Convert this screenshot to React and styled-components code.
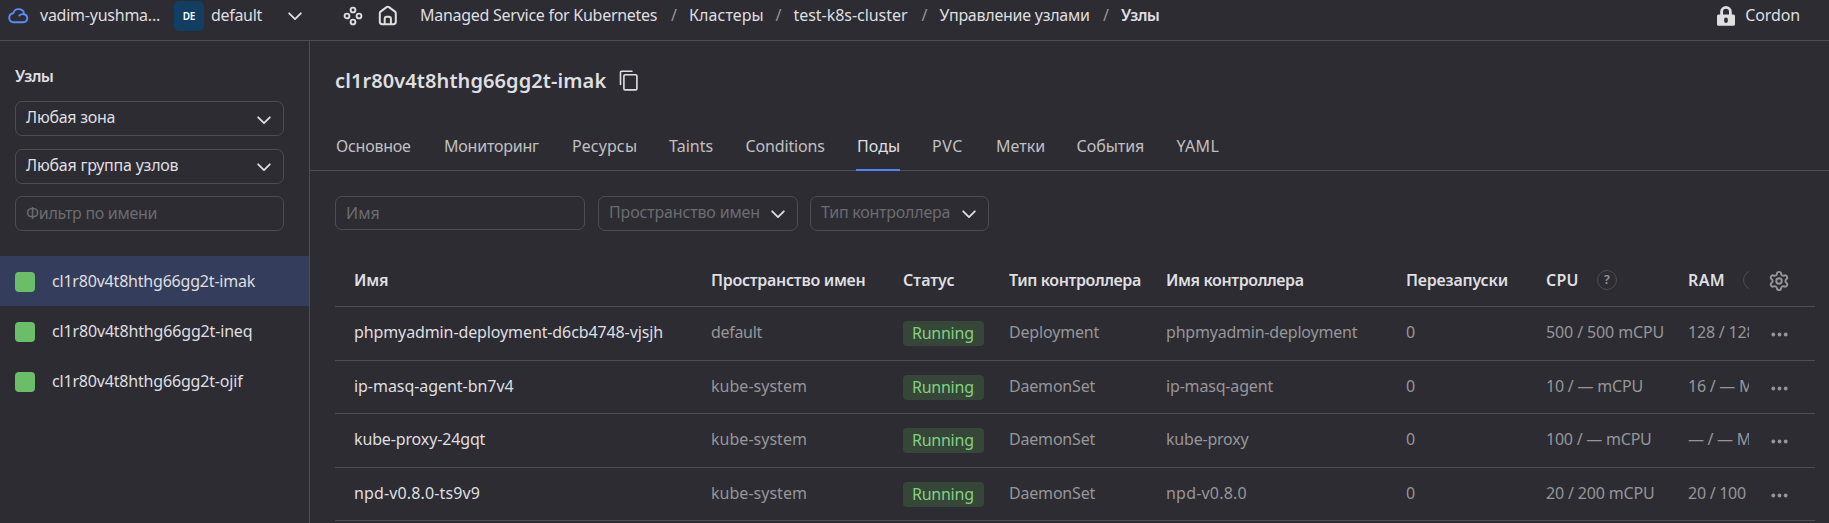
import React from 'react';
import styled, { createGlobalStyle, css } from 'styled-components';
import { Settings } from 'lucide-react';

const c = {
  bg: '#2d2c33',
  text: '#dfdfe0',
  complementary: '#c0c0c2',
  secondary: '#969699',
  hint: '#6c6b70',
  line: '#4d4c52',
  selected: '#353d5c',
  accent: '#5282ff',
};

const GlobalStyle = createGlobalStyle`
  *, *::before, *::after { box-sizing: border-box; }
  body {
    margin: 0;
    background: ${c.bg};
    color: ${c.text};
    font: 400 16px/24px "Noto Sans", "Open Sans", sans-serif;
    overflow: hidden;
  }
`;

const Page = styled.div`
  display: flex;
  flex-direction: column;
  height: 523px;
  overflow: hidden;
`;

const Text = styled.span`
  display: block;
  flex: none;
  white-space: pre;
  letter-spacing: ${(p) => p.$track || 0}px;
  font-weight: ${(p) => (p.$bold ? 600 : 400)};
  width: ${(p) => (p.$w ? `${p.$w}px` : 'auto')};
`;

/* Header */
const Header = styled.header`
  flex: none;
  display: flex;
  align-items: flex-start;
  height: 41px;
  border-bottom: 1px solid ${c.line};
`;

const Icon = styled.svg`
  display: block;
  flex: none;
  fill: none;
  stroke: ${(p) => p.$color || c.text};
  stroke-width: ${(p) => p.$stroke || 1.9};
  stroke-linecap: round;
  stroke-linejoin: round;
`;

const Account = styled.div`
  display: flex;
  width: 343px;
  padding-left: 7px;
  ${Icon} { margin-top: 7px; }
  ${Text} { margin-top: 3px; }
`;

const AccountName = styled(Text)`
  width: 124px;
  margin-left: 11px;
`;

const FolderBadge = styled.div`
  width: 30px;
  height: 30px;
  margin: 1px 7px 0 10px;
  border-radius: 5px;
  background: #123e63;
  color: #fff;
  font-size: 10px;
  font-weight: 600;
  line-height: 31px;
  text-align: center;
  letter-spacing: -0.3px;
`;

const DropArrow = styled.span`
  padding-top: 5px;
`;

const Shortcuts = styled.div`
  display: flex;
  gap: 14px;
  width: 77px;
  padding-top: 5px;
`;

const Crumbs = styled.nav`
  display: flex;
  flex: 1;
  padding-top: 3px;
`;

const Slash = styled.span`
  width: 6px;
  margin: 0 12px 0 11px;
  color: ${c.secondary};
`;

const CordonButton = styled.div`
  display: flex;
  gap: 10px;
  padding: 3px 29px 0 0;
  ${Icon} { margin-top: 2px; }
`;

/* Body */
const Body = styled.div`
  display: flex;
  flex: 1;
  min-height: 0;
`;

const Sidebar = styled.aside`
  flex: none;
  width: 310px;
  border-right: 1px solid ${c.line};
`;

const SidebarFilters = styled.div`
  display: flex;
  flex-direction: column;
  padding: 23px 25px 0 15px;
  height: 215px;
`;

const Field = styled.div`
  display: flex;
  flex: none;
  justify-content: ${(p) => (p.$compact ? 'flex-start' : 'space-between')};
  width: ${(p) => (p.$w ? `${p.$w}px` : 'auto')};
  height: ${(p) => p.$h || 35}px;
  padding: ${(p) => p.$top || 3}px 12px 0 10px;
  border: 1px solid ${c.line};
  border-radius: 7px;
  color: ${(p) => (p.$hint ? c.hint : c.text)};
  ${Icon} { margin-top: ${(p) => p.$arrow || 10}px; }
`;

const SidebarField = styled(Field)`
  margin-top: ${(p) => p.$gap}px;
`;

const Node = styled.div`
  display: flex;
  align-items: center;
  height: 50px;
  padding-left: 15px;
  background: ${(p) => (p.$active ? c.selected : 'transparent')};
`;

const NodeState = styled.span`
  width: 20px;
  height: 20px;
  margin: 2px 17px 0 0;
  border-radius: 4px;
  background: #6cbd6a;
`;

const Main = styled.main`
  flex: 1;
  min-width: 0;
`;

const TitleRow = styled.div`
  display: flex;
  height: 88px;
  padding: 26px 0 0 25px;
  font-size: 20px;
  line-height: 28px;
  ${Icon} { margin: 3px 0 0 13px; }
`;

const Tabs = styled.div`
  display: flex;
  gap: 31px;
  height: 42px;
  padding-left: 25px;
  border-bottom: 1px solid ${c.line};
`;

const Tab = styled(Text)`
  height: 42px;
  padding: 5px 0 0 1px;
  color: ${c.complementary};
  ${(p) => p.$active && css`
    color: ${c.text};
    border-bottom: 2px solid ${c.accent};
  `}
`;

const TableFilters = styled.div`
  display: flex;
  gap: 12px;
  height: 61px;
  padding: 25px 0 0 25px;
`;

const SearchField = styled(Field)`
  margin-right: 1px;
`;

const Table = styled.div`
  margin: 0 14px 0 25px;
`;

const Row = styled.div`
  display: grid;
  grid-template-columns: 357px 192px 106px 157px 240px 140px 142px 61px 66px;
  height: ${(p) => p.$h}px;
  padding: ${(p) => p.$top}px 0 0 19px;
  border-bottom: 1px solid ${c.line};
`;

const Cell = styled.div`
  display: flex;
  overflow: hidden;
  white-space: nowrap;
  color: ${(p) => (p.$primary ? c.text : c.secondary)};
`;

const Status = styled.span`
  width: 81px;
  height: 25px;
  margin-top: 1px;
  padding-left: 9px;
  border-radius: 4px;
  background: #364638;
  color: #84d182;
  letter-spacing: -0.25px;
`;

const Help = styled.span`
  flex: none;
  width: 20px;
  height: 20px;
  margin: 2px 0 0 19px;
  border: 1px solid ${c.line};
  border-radius: 50%;
  color: ${c.secondary};
  font-size: 12.5px;
  font-weight: 600;
  line-height: 18px;
  text-align: center;
`;

const Actions = styled.div`
  display: flex;
  padding: ${(p) => p.$top}px 0 0 ${(p) => p.$left}px;
`;

const Chevron = () => (
  <Icon width="14" height="9" viewBox="0 0 14 9" $stroke={1.8}>
    <path d="M1.2 1.3 7 7.1l5.8-5.8" />
  </Icon>
);

const Cloud = () => (
  <Icon width="22" height="17" viewBox="0 0 22 17" $color="#5a8bff">
    <path d="M5.6 15.2h10.6a4 4 0 0 0 .9-7.9A5.5 5.5 0 0 0 6.3 6.2 4.6 4.6 0 0 0 5.6 15.2z" />
    <path d="M12.3 8.6c.9-1.2 2.6-1.8 4.6-1.3" />
  </Icon>
);

const Services = () => (
  <Icon width="21" height="22" viewBox="0 0 21 22">
    <circle cx="10" cy="5" r="2.4" />
    <circle cx="4" cy="11" r="2.4" />
    <circle cx="16" cy="11" r="2.4" />
    <circle cx="10" cy="17" r="2.4" />
  </Icon>
);

const Home = () => (
  <Icon width="20" height="21" viewBox="0 0 20 21" $stroke={2}>
    <path d="M1.8 8.2a2 2 0 0 1 .8-1.6l6-4.5a2 2 0 0 1 2.4 0l6 4.5a2 2 0 0 1 .8 1.6v8.6a2.4 2.4 0 0 1-2.4 2.4H4.2a2.4 2.4 0 0 1-2.4-2.4z" />
    <path d="M6.7 19v-5.3a2 2 0 0 1 2-2h2.2a2 2 0 0 1 2 2V19" />
  </Icon>
);

const Lock = () => (
  <Icon width="18" height="21" viewBox="0 0 18 21" $stroke={2.8}>
    <path d="M4.6 11V6.8a4.4 4.4 0 0 1 8.8 0V11" />
    <path
      fill={c.text}
      stroke="none"
      fillRule="evenodd"
      d="M1.5 9.4h15A1.5 1.5 0 0 1 18 10.9v8.3a1.6 1.6 0 0 1-1.6 1.6H1.6A1.6 1.6 0 0 1 0 19.2v-8.3a1.5 1.5 0 0 1 1.5-1.5zM9 12.5a1.8 1.8 0 0 0-1.8 1.8v2a1.8 1.8 0 0 0 3.6 0v-2A1.8 1.8 0 0 0 9 12.5z"
    />
  </Icon>
);

const Copy = () => (
  <Icon width="19" height="21" viewBox="0 0 19 21" $stroke={1.6}>
    <path d="M1.5 14.5V2.3a1 1 0 0 1 1-1H13" />
    <rect x="4.9" y="4.7" width="13" height="15.2" rx="1.2" />
  </Icon>
);

const Dots = () => (
  <Icon width="17" height="5" viewBox="0 0 17 5" $color="none">
    {[2.3, 8.5, 14.7].map((x) => (
      <circle key={x} cx={x} cy="2.5" r="1.9" fill={c.secondary} />
    ))}
  </Icon>
);

const nodes = [
  ['cl1r80v4t8hthg66gg2t-imak', -0.2],
  ['cl1r80v4t8hthg66gg2t-ineq', -0.16],
  ['cl1r80v4t8hthg66gg2t-ojif', -0.18],
];

const tabs = [
  ['Основное', 77, -0.25],
  ['Мониторинг', 97, -0.22],
  ['Ресурсы', 66, 0.15],
  ['Taints', 45.5, 0.02],
  ['Conditions', 80.5, -0.15],
  ['Поды', 44, 0.07],
  ['PVC', 33, 0.6],
  ['Метки', 49.5, 0.05],
  ['События', 69, -0.05],
  ['YAML', 46, 0.4],
];

const crumbs = [
  ['Managed Service for Kubernetes', -0.27, 240],
  ['Кластеры', 0.07, 75.5],
  ['test-k8s-cluster', -0.04, 117],
  ['Управление узлами', -0.25, 152.5],
];

const columns = [
  ['Имя', -0.2],
  ['Пространство имен', -0.3],
  ['Статус', 0],
  ['Тип контроллера', -0.41],
  ['Имя контроллера', -0.41],
  ['Перезапуски', -0.2],
  ['CPU', 0.23, 32],
  ['RAM', 0.4, 36],
];

const pods = [
  {
    name: ['phpmyadmin-deployment-d6cb4748-vjsjh', -0.11],
    ns: ['default', -0.31],
    kind: ['Deployment', -0.17],
    owner: ['phpmyadmin-deployment', -0.21],
    cpu: ['500 / 500 mCPU', -0.12],
    ram: ['128 / 128 МБ', -0.2],
  },
  {
    name: ['ip-masq-agent-bn7v4', -0.05],
    ns: ['kube-system', 0.02],
    kind: ['DaemonSet', -0.19],
    owner: ['ip-masq-agent', -0.17],
    cpu: ['10 / — mCPU', -0.2],
    ram: ['16 / — МБ', -0.25],
  },
  {
    name: ['kube-proxy-24gqt', -0.14],
    ns: ['kube-system', 0.02],
    kind: ['DaemonSet', -0.19],
    owner: ['kube-proxy', -0.21],
    cpu: ['100 / — mCPU', -0.23],
    ram: ['— / — МБ', -0.3],
  },
  {
    name: ['npd-v0.8.0-ts9v9', 0.14],
    ns: ['kube-system', 0.02],
    kind: ['DaemonSet', -0.19],
    owner: ['npd-v0.8.0', 0.2],
    cpu: ['20 / 200 mCPU', -0.16],
    ram: ['20 / 100 МБ', -0.27],
  },
];

const TextCell = ({ value: [text, track], primary }) => (
  <Cell $primary={primary}>
    <Text $track={track}>{text}</Text>
  </Cell>
);

export default function App() {
  return (
    <Page>
      <GlobalStyle />
      <Header>
        <Account>
          <Cloud />
          <AccountName $track={-0.24}>vadim-yushma...</AccountName>
          <FolderBadge>DE</FolderBadge>
          <Text $track={-0.31} $w={77}>default</Text>
          <DropArrow><Chevron /></DropArrow>
        </Account>
        <Shortcuts>
          <Services />
          <Home />
        </Shortcuts>
        <Crumbs>
          {crumbs.map(([label, track, w]) => (
            <React.Fragment key={label}>
              <Text $track={track} $w={w}>{label}</Text>
              <Slash>/</Slash>
            </React.Fragment>
          ))}
          <Text $bold $track={-0.6}>Узлы</Text>
        </Crumbs>
        <CordonButton>
          <Lock />
          <Text $track={-0.12}>Cordon</Text>
        </CordonButton>
      </Header>
      <Body>
        <Sidebar>
          <SidebarFilters>
            <Text $bold $track={-0.6}>Узлы</Text>
            <SidebarField $gap={13} $arrow={11}>
              <Text $track={-0.27}>Любая зона</Text>
              <Chevron />
            </SidebarField>
            <SidebarField $gap={13}>
              <Text $track={-0.23}>Любая группа узлов</Text>
              <Chevron />
            </SidebarField>
            <SidebarField $gap={12} $hint $top={4}>
              <Text $track={-0.3}>Фильтр по имени</Text>
            </SidebarField>
          </SidebarFilters>
          {nodes.map(([name, track], i) => (
            <Node key={name} $active={i === 0}>
              <NodeState />
              <Text $track={track}>{name}</Text>
            </Node>
          ))}
        </Sidebar>
        <Main>
          <TitleRow>
            <Text $bold $track={0.09}>cl1r80v4t8hthg66gg2t-imak</Text>
            <Copy />
          </TitleRow>
          <Tabs>
            {tabs.map(([label, w, track]) => (
              <Tab key={label} $w={w} $track={track} $active={label === 'Поды'}>{label}</Tab>
            ))}
          </Tabs>
          <TableFilters>
            <SearchField $w={250} $h={34} $top={4} $hint>
              <Text $track={0.1}>Имя</Text>
            </SearchField>
            <Field $w={200} $hint $compact>
              <Text $track={-0.16} $w={162}>Пространство имен</Text>
              <Chevron />
            </Field>
            <Field $w={179} $hint $compact>
              <Text $track={-0.23} $w={141}>Тип контроллера</Text>
              <Chevron />
            </Field>
          </TableFilters>
          <Table>
            <Row $h={75} $top={36}>
              {columns.map(([label, track, helpOffset]) => (
                <Cell key={label} $primary>
                  <Text $bold $track={track} $w={helpOffset}>{label}</Text>
                  {helpOffset && <Help>?</Help>}
                </Cell>
              ))}
              <Actions $top={2} $left={19}>
                <Settings size={22} color={c.secondary} strokeWidth={2.1} />
              </Actions>
            </Row>
            {pods.map((pod, i) => (
              <Row key={pod.name[0]} $h={i % 2 ? 53 : 54} $top={13}>
                <TextCell primary value={pod.name} />
                <TextCell value={pod.ns} />
                <Cell><Status>Running</Status></Cell>
                <TextCell value={pod.kind} />
                <TextCell value={pod.owner} />
                <Cell>0</Cell>
                <TextCell value={pod.cpu} />
                <TextCell value={pod.ram} />
                <Actions $top={11.5} $left={21.5}><Dots /></Actions>
              </Row>
            ))}
          </Table>
        </Main>
      </Body>
    </Page>
  );
}
